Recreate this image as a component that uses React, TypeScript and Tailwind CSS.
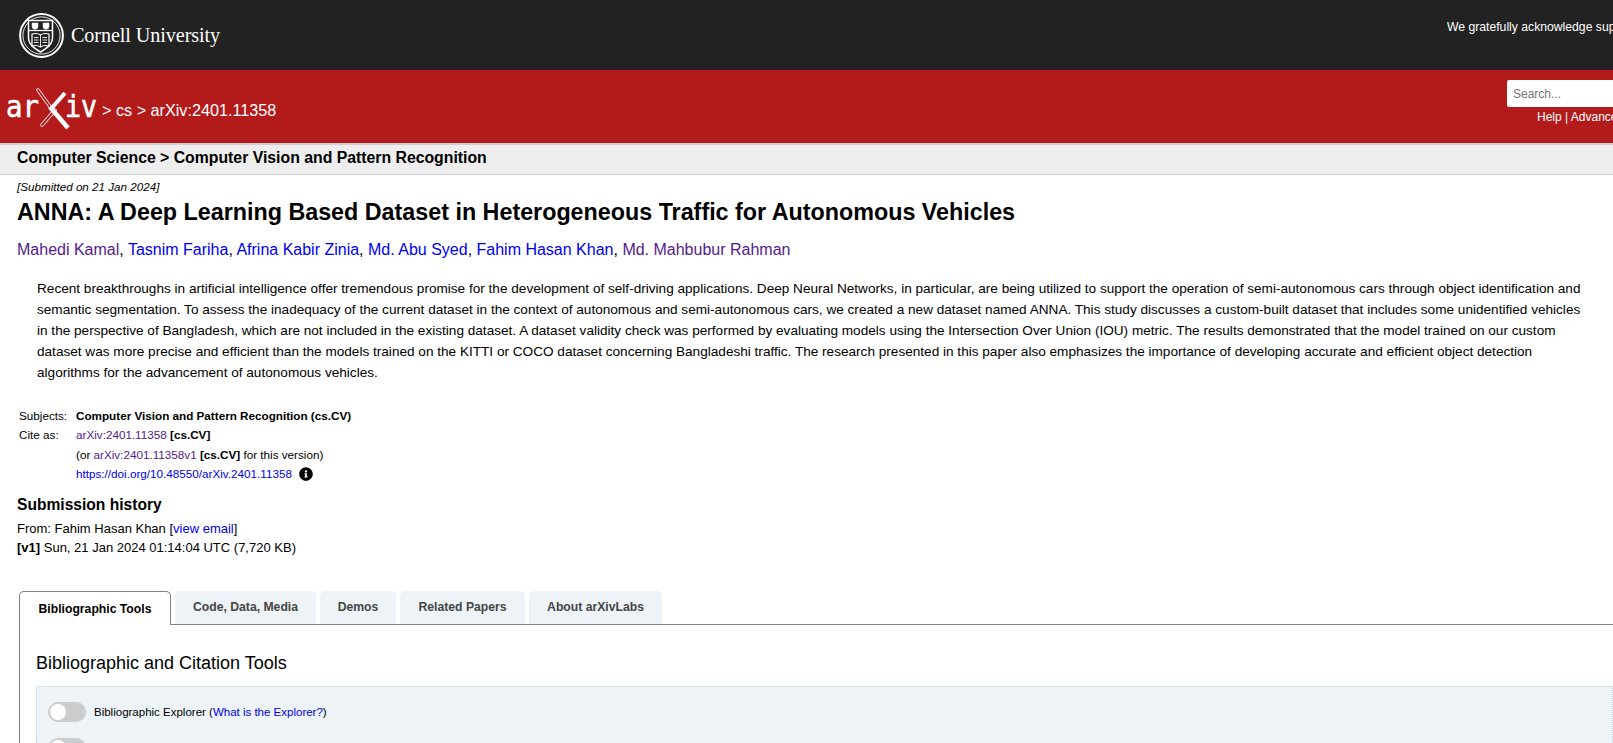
import { FaInfoCircle } from "react-icons/fa";

const purple = "text-[#551a8b]";
const blue = "text-[#0000ee]";

const authors = [
  { name: "Mahedi Kamal", visited: true },
  { name: "Tasnim Fariha", visited: false },
  { name: "Afrina Kabir Zinia", visited: false },
  { name: "Md. Abu Syed", visited: false },
  { name: "Fahim Hasan Khan", visited: false },
  { name: "Md. Mahbubur Rahman", visited: true },
];

const tabs = [
  { label: "Code, Data, Media", width: "w-[141px]" },
  { label: "Demos", width: "w-[76px]" },
  { label: "Related Papers", width: "w-[125px]" },
  { label: "About arXivLabs", width: "w-[133px]" },
];

function CornellLogo() {
  return (
    <svg width="45" height="45" viewBox="0 0 45 45" fill="none" stroke="white" className="shrink-0">
      <circle cx="22.5" cy="22.5" r="21.4" strokeWidth="2" />
      <circle cx="22.5" cy="22.5" r="18.6" strokeWidth="0.9" />
      <path d="M9.500 7.500h24v17c0 7-5.500 10.500-12 14.500-6.500-4-12-7.500-12-14.500z" strokeWidth="1.500" fill="#222222" />
      <path d="M9.500 17.500h24" strokeWidth="1.300" />
      <path d="M13 10h6v3.200a3 3 0 0 1-6 0zM24 10h6v3.200a3 3 0 0 1-6 0z" fill="white" strokeWidth="0.5" />
      <path d="M13 21c3-.8 6.500-.5 8.500 1 2-1.500 5.500-1.800 8.500-1v12c-3-.8-6.500-.5-8.500 1-2-1.500-5.500-1.800-8.500-1z" strokeWidth="1.200" />
      <path d="M21.500 22v12M15 24.500h4.500M15 27h4.500M15 29.500h4.500M23.500 24.500H28M23.500 27H28M23.500 29.500H28" strokeWidth="0.9" />
    </svg>
  );
}

function ArxivLogo() {
  return (
    <svg width="92" height="44" viewBox="0 0 92 44" className="shrink-0 overflow-visible">
      <text
        x="0"
        y="29"
        fill="white"
        stroke="white"
        strokeWidth="0.6"
        fontFamily="'DejaVu Sans Mono', monospace"
        fontSize="31"
        textLength="33"
        lengthAdjust="spacingAndGlyphs"
      >
        ar
      </text>
      <text
        x="59"
        y="29"
        fill="white"
        stroke="white"
        strokeWidth="0.6"
        fontFamily="'DejaVu Sans Mono', monospace"
        fontSize="31"
        textLength="32"
        lengthAdjust="spacingAndGlyphs"
      >
        iv
      </text>
      {/* outlined pen strokes */}
      <path d="M32 2 L45 20 M49 22 L36 37" stroke="white" strokeWidth="3.500" strokeLinecap="round" />
      <path d="M32 2 L45 20 M49 22 L36 37" stroke="#b31b1b" strokeWidth="2" strokeLinecap="round" />
      {/* solid X strokes */}
      <path d="M59 5 L44 22" stroke="white" strokeWidth="4" />
      <path d="M44 19 L62 40" stroke="white" strokeWidth="4.500" />
    </svg>
  );
}

export default function App() {
  return (
    <div className="h-[743px] w-[1613px] overflow-hidden bg-white font-['Liberation_Sans',Arial,sans-serif] text-black">
      <header className="flex h-[70px] items-center justify-between bg-[#222222]">
        <div className="flex items-center gap-[7px] pl-[19px]">
          <CornellLogo />
          <span className="font-['Liberation_Serif',serif] text-[20.200px] leading-none tracking-[-0.1px] text-white">
            Cornell University
          </span>
        </div>
        <p className="mb-[16px] w-[166px] overflow-hidden whitespace-nowrap text-[12.200px] text-white">
          We gratefully acknowledge support
        </p>
      </header>

      <div className="flex h-[73px] items-start justify-between bg-[#b31b1b]">
        <div className="flex items-start gap-[4px] pl-[6px] pt-[18px]">
          <ArxivLogo />
          <span className="pt-[11px] text-[16.200px] leading-[22px] text-white">&gt; cs &gt; arXiv:2401.11358</span>
        </div>
        <div className="w-[106px] overflow-hidden pt-[10px]">
          <div className="h-[27px] w-[200px] rounded-[2px] bg-white pl-[6px] pt-[1px] text-[12px] leading-[27px] text-[#757575]">
            Search...
          </div>
          <p className="w-[106px] overflow-hidden whitespace-nowrap pl-[30px] pt-[2px] text-[12px] leading-[16px] text-white">
            Help | Advanced
          </p>
        </div>
      </div>

      <div className="flex h-[32px] items-center border-b border-t-2 border-[#d0d0d0] bg-[#eeeeee] pb-[3px] pl-[17px] text-[15.800px] font-bold">
        Computer Science &gt; Computer Vision and Pattern Recognition
      </div>

      <main className="pl-[17px]">
        <p className="pt-[5px] text-[11.650px] italic leading-[13px]">[Submitted on 21 Jan 2024]</p>
        <h1 className="mt-[7px] text-[23.300px] font-bold leading-[25px]">
          ANNA: A Deep Learning Based Dataset in Heterogeneous Traffic for Autonomous Vehicles
        </h1>
        <p className="mt-[15px] text-[16px] leading-[20px]">
          {authors.map((a, i) => (
            <span key={a.name}>
              <span className={a.visited ? purple : blue}>{a.name}</span>
              {i < authors.length - 1 && ", "}
            </span>
          ))}
        </p>

        <blockquote className="ml-[20px] mt-[18px] w-[1550px] text-[13.600px] leading-[21px]">
          Recent breakthroughs in artificial intelligence offer tremendous promise for the development of self-driving applications. Deep Neural Networks, in particular, are being utilized to support the operation of semi-autonomous cars through object identification and semantic segmentation. To assess the inadequacy of the current dataset in the context of autonomous and semi-autonomous cars, we created a new dataset named ANNA. This study discusses a custom-built dataset that includes some unidentified vehicles in the perspective of Bangladesh, which are not included in the existing dataset. A dataset validity check was performed by evaluating models using the Intersection Over Union (IOU) metric. The results demonstrated that the model trained on our custom dataset was more precise and efficient than the models trained on the KITTI or COCO dataset concerning Bangladeshi traffic. The research presented in this paper also emphasizes the importance of developing accurate and efficient object detection algorithms for the advancement of autonomous vehicles.
        </blockquote>

        <div className="ml-[2px] mt-[22.500px] grid grid-cols-[57px_1fr] text-[11.700px] leading-[19.500px]">
          <span>Subjects:</span>
          <span className="font-bold">Computer Vision and Pattern Recognition (cs.CV)</span>
          <span>Cite as:</span>
          <span>
            <span className={purple}>arXiv:2401.11358</span> <b>[cs.CV]</b>
          </span>
          <span />
          <span>
            (or <span className={purple}>arXiv:2401.11358v1</span> <b>[cs.CV]</b> for this version)
          </span>
          <span />
          <span className="flex items-center gap-[7px]">
            <span className={blue}>https://doi.org/10.48550/arXiv.2401.11358</span>
            <FaInfoCircle className="size-[14px] text-black" />
          </span>
        </div>

        <h2 className="mt-[11.500px] text-[15.600px] font-bold leading-[20px]">Submission history</h2>
        <p className="mt-[4px] text-[13px] leading-[19px]">
          From: Fahim Hasan Khan [<span className={blue}>view email</span>]
        </p>
        <p className="text-[13px] leading-[19px]">
          <b>[v1]</b> Sun, 21 Jan 2024 01:14:04 UTC (7,720 KB)
        </p>
      </main>

      <section className="ml-[19px] mt-[34px]">
        <div className="flex h-[34px] items-stretch gap-[4px] border-b border-[#808080] text-[12.200px] font-bold">
          <div className="relative z-10 flex h-[34px] w-[152px] items-center justify-center rounded-t-[5px] border border-b-0 border-[#808080] bg-white pt-[1px]">
            Bibliographic Tools
          </div>
          {tabs.map((t) => (
            <div
              key={t.label}
              className={`flex items-center justify-center rounded-t-[5px] bg-[#edf3f7] pb-[1px] text-[#454545] ${t.width}`}
            >
              {t.label}
            </div>
          ))}
        </div>
        <div className="border-l border-[#808080] pl-[16px] pt-[27px]">
          <h3 className="text-[18px] leading-[22px]">Bibliographic and Citation Tools</h3>
          <div className="mt-[12px] border border-dotted border-[#c5d3dc] bg-[#edf3f7] pl-[11px] pt-[15px]">
            <div className="flex h-[20px] items-center gap-[8px] text-[11.500px]">
              <span className="flex h-[20px] w-[38px] items-center rounded-full bg-[#cccccc] pl-[2px]">
                <span className="size-[16px] rounded-full bg-white" />
              </span>
              <span className="pt-[1px]">
                Bibliographic Explorer (<span className={blue}>What is the Explorer?</span>)
              </span>
            </div>
            <div className="mt-[16px] flex h-[20px] w-[38px] items-center rounded-full bg-[#cccccc] pl-[2px]">
              <span className="size-[16px] rounded-full bg-white" />
            </div>
          </div>
        </div>
      </section>
    </div>
  );
}
